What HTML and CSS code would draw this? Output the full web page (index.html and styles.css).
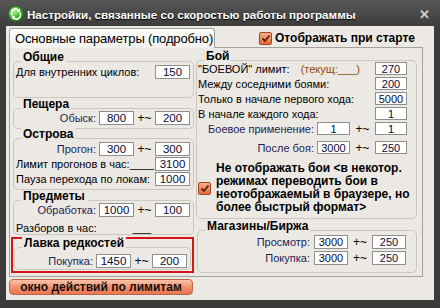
FILE: index.html
```html
<!DOCTYPE html>
<html lang="ru">
<head>
    <meta charset="UTF-8">
    <meta name="viewport" content="width=device-width, initial-scale=1.0">
    <title>Настройки</title>
    <link rel="stylesheet" href="styles.css">
</head>
<body>
<div class="window">
    <div class="titlebar">
        <svg class="app-icon" width="16" height="16" viewBox="0 0 16 16">
            <defs>
                <radialGradient id="gr" cx="40%" cy="35%" r="70%">
                    <stop offset="0" stop-color="#b6f58e"/>
                    <stop offset="0.5" stop-color="#3fc225"/>
                    <stop offset="1" stop-color="#12700a"/>
                </radialGradient>
            </defs>
            <circle cx="8" cy="8" r="7.5" fill="url(#gr)"/>
            <path d="M4.2 9.2 A4 4 0 0 1 11 4.8" fill="none" stroke="#fff" stroke-width="1.8"/>
            <path d="M11.8 2.8 L12.2 6.6 L8.6 5.8 Z" fill="#fff"/>
            <path d="M11.8 6.8 A4 4 0 0 1 5 11.2" fill="none" stroke="#fff" stroke-width="1.8"/>
            <path d="M4.2 13.2 L3.8 9.4 L7.4 10.2 Z" fill="#fff"/>
        </svg>
        <span class="title">Настройки, связанные со скоростью работы программы</span>
        <span class="close">✕</span>
    </div>
    <div class="client">
        <div class="tabs">
            <div class="tab">Основные параметры (подробно)</div>
            <label class="check top-check">
                <span class="box"><svg width="10" height="9" viewBox="0 0 10 9"><path d="M1.5 4.5 L4 7 L8.5 1.5" fill="none" stroke="#5a2108" stroke-width="1.8"/></svg></span>
                Отображать при старте
            </label>
        </div>
        <div class="page">
            <div class="col-left">
                <div class="group g-common">
                    <div class="legend">Общие</div>
                    <div class="fields">
                        <span class="lbl wide">Для внутренних циклов:</span><input class="num" type="text" value="150">
                    </div>
                </div>
                <div class="group g-cave">
                    <div class="legend">Пещера</div>
                    <div class="fields">
                        <span class="lbl right">Обыск:</span><input class="num" type="text" value="800"><span class="sign">+~</span><input class="num" type="text" value="200">
                    </div>
                </div>
                <div class="group g-islands">
                    <div class="legend">Острова</div>
                    <div class="fields">
                        <span class="lbl right">Прогон:</span><input class="num" type="text" value="300"><span class="sign">+~</span><input class="num" type="text" value="300">
                        <span class="lbl wide">Лимит прогонов в час:____</span><input class="num" type="text" value="3100">
                        <span class="lbl wide">Пауза перехода по локам:</span><input class="num" type="text" value="1000">
                    </div>
                </div>
                <div class="group g-items">
                    <div class="legend">Предметы</div>
                    <div class="fields">
                        <span class="lbl right">Обработка:</span><input class="num" type="text" value="1000"><span class="sign">+~</span><input class="num" type="text" value="100">
                        <span class="lbl all">Разборов в час:<span class="blank">___</span></span>
                    </div>
                </div>
                <div class="rare-wrap">
                    <div class="group g-rare">
                        <div class="legend">Лавка редкостей</div>
                        <div class="fields">
                            <span class="lbl right">Покупка:</span><input class="num" type="text" value="1450"><span class="sign">+~</span><input class="num" type="text" value="200">
                        </div>
                    </div>
                </div>
            </div>
            <div class="col-right">
                <div class="group g-fight">
                    <div class="legend">Бой</div>
                    <div class="fields">
                        <span class="lbl wide">"БОЕВОЙ" лимит:<span class="cur">(текущ:___)</span></span><input class="num" type="text" value="270">
                        <span class="lbl wide">Между соседними боями:</span><input class="num" type="text" value="200">
                        <span class="lbl wide">Только в начале первого хода:</span><input class="num" type="text" value="5000">
                        <span class="lbl wide">В начале каждого хода:</span><input class="num" type="text" value="1">
                        <span class="lbl right">Боевое применение:</span><input class="num" type="text" value="1"><span class="sign">+~</span><input class="num" type="text" value="1">
                    </div>
                    <div class="fields after">
                        <span class="lbl right">После боя:</span><input class="num" type="text" value="3000"><span class="sign">+~</span><input class="num" type="text" value="250">
                    </div>
                    <label class="check fight-check">
                        <span class="box"><svg width="10" height="9" viewBox="0 0 10 9"><path d="M1.5 4.5 L4 7 L8.5 1.5" fill="none" stroke="#5a2108" stroke-width="1.8"/></svg></span>
                        <span class="check-text">Не отображать бои &lt;в некотор.<br>режимах переводить бои в<br>неотображаемый в браузере, но<br>более быстрый формат&gt;</span>
                    </label>
                </div>
                <div class="group g-shop">
                    <div class="legend">Магазины/Биржа</div>
                    <div class="fields">
                        <span class="lbl right">Просмотр:</span><input class="num" type="text" value="3000"><span class="sign">+~</span><input class="num" type="text" value="250">
                        <span class="lbl right">Покупка:</span><input class="num" type="text" value="3000"><span class="sign">+~</span><input class="num" type="text" value="250">
                    </div>
                </div>
            </div>
        </div>
        <button class="limits">окно действий по лимитам</button>
    </div>
</div>
</body>
</html>
```

FILE: styles.css
```css
/* window chrome */
body {
    margin: 0;
    background-color: #3b3b3b;
    font-family: "Liberation Sans", Arial, sans-serif;
    color: #000;
}
.window {
    width: 440px;
    height: 308px;
    display: flex;
    flex-direction: column;
    background-color: #3b3b3b;
}
.titlebar {
    height: 26px;
    display: flex;
    align-items: center;
    padding: 2px 10px 0 8px;
    box-sizing: border-box;
    background: linear-gradient(#565656, #3d3d3d);
    color: #fff;
    font-weight: bold;
    font-size: 11.6px;
}
.app-icon {
    margin-right: 3px;
}
.title {
    flex: 1;
    white-space: nowrap;
    text-shadow: 0 1px 1px #000;
}
.close {
    color: #cfcfcf;
    font-size: 13px;
    font-weight: bold;
}
.client {
    flex: 1;
    margin: 0 6px 8px 6px;
    padding: 2px 0 0 3px;
    background-color: #ece9e4;
}

/* tab strip */
.tabs {
    display: flex;
    align-items: center;
    height: 20px;
}
.tab {
    position: relative;
    z-index: 1;
    width: 206px;
    height: 20px;
    box-sizing: border-box;
    border: 1px solid #a4a29c;
    border-bottom: none;
    border-radius: 3px 3px 0 0;
    background: linear-gradient(#fdfdfc, #f2f1ec);
    padding-left: 5px;
    font-size: 13px;
    letter-spacing: -0.15px;
    line-height: 19px;
    white-space: nowrap;
}
.check {
    display: flex;
    align-items: center;
    font-weight: bold;
    font-size: 12px;
}
.box {
    display: flex;
    align-items: center;
    justify-content: center;
    width: 13px;
    height: 13px;
    box-sizing: border-box;
    border: 1px solid #a1461f;
    border-radius: 2px;
    background: linear-gradient(#f6b08c, #e36a3c);
}
.top-check {
    margin-left: 44px;
    gap: 3px;
    color: #000;
}
.page {
    width: 414px;
    height: 230px;
    box-sizing: border-box;
    margin-top: -1px;
    border: 1px solid #a4a29c;
    padding-left: 3px;
    display: grid;
    grid-template-columns: 181px 221px;
    column-gap: 2px;
}

/* group boxes */
.col-left, .col-right {
    display: flex;
    flex-direction: column;
}
.group {
    position: relative;
    box-sizing: border-box;
    border: 1px solid #cbc7be;
    border-radius: 5px;
}
.legend {
    position: absolute;
    top: -11px;
    left: 7px;
    padding: 0 2px;
    background-color: #ece9e4;
    font-weight: bold;
    font-size: 12px;
    line-height: 13px;
}
.fields {
    display: grid;
    grid-template-columns: 1fr 35px 21px 35px;
    grid-auto-rows: 15px;
    align-items: center;
}
.lbl {
    font-size: 11px;
    white-space: nowrap;
}
.lbl.wide {
    grid-column: 1 / 4;
}
.lbl.all {
    grid-column: 1 / 5;
}
.lbl.right {
    text-align: right;
    padding-right: 3px;
    color: #1d1d55;
}
.sign {
    text-align: center;
    font-size: 12px;
}
.blank {
    margin-left: 36px;
}
.num {
    width: 100%;
    height: 14px;
    box-sizing: border-box;
    margin: 0;
    padding: 0;
    border: 1px solid #8f8f8f;
    background: #fff;
    font-family: "Liberation Sans", Arial, sans-serif;
    font-size: 11.5px;
    color: #0b0b35;
    text-align: center;
}

.g-common {
    margin-top: 13px;
    height: 37px;
    padding: 2px 3px 0 2px;
}
.g-common .fields {
    grid-auto-rows: 16px;
}
.g-cave {
    margin-top: 10px;
    height: 21px;
    padding: 1px 3px 0 2px;
}
.g-cave .fields {
    grid-auto-rows: 16px;
}
.g-islands {
    margin-top: 9px;
    height: 52px;
    padding: 2px 3px 0 2px;
}
.g-items {
    margin-top: 10px;
    height: 35px;
    padding: 1px 3px 0 2px;
}
.g-items .fields {
    row-gap: 3px;
}
.rare-wrap {
    margin: 2px 0 0 -2px;
    height: 36px;
    box-sizing: border-box;
    border: 2px solid #d01818;
    padding: 8px 1px 0 1px;
}
.g-rare {
    height: 23px;
    padding: 5px 3px 0 2px;
}

/* right column */
.g-fight {
    margin-top: 12px;
    height: 159px;
    padding: 0 9px 0 1px;
}
.g-fight .fields {
    grid-template-columns: 1fr 33px 25px 32px;
}
.g-fight .lbl, .g-fight .num, .g-shop .lbl, .g-shop .num {
    font-size: 11px;
}
.g-fight .num {
    height: 13px;
}
.fields.after {
    margin-top: 4px;
}
.cur {
    margin-left: 11px;
    color: #8a4a06;
}
.fight-check {
    margin-top: 7px;
    gap: 5px;
    margin-right: -8px;
}
.check-text {
    line-height: 13px;
    white-space: nowrap;
}
.g-shop {
    margin: 11px 0 0 1px;
    height: 43px;
    padding: 3px 10px 0 1px;
}
.g-shop .fields {
    grid-template-columns: 1fr 34px 24px 34px;
    grid-auto-rows: 16px;
}
.g-shop .lbl.right {
    padding-right: 4px;
}

/* bottom button */
.limits {
    display: block;
    width: 184px;
    height: 16px;
    margin-top: 2px;
    padding: 0;
    border: 1px solid #b9694b;
    border-radius: 4px;
    background: linear-gradient(#fac4ab, #f08d69 55%, #e97650);
    font-family: "Liberation Sans", Arial, sans-serif;
    font-weight: bold;
    font-size: 12px;
    line-height: 14px;
    color: #111;
    cursor: pointer;
}
```
